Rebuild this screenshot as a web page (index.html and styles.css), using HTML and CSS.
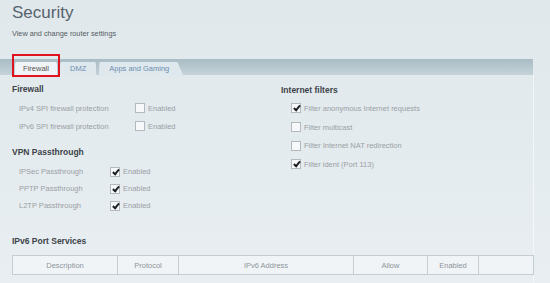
FILE: index.html
```html
<!DOCTYPE html>
<html lang="en">
<head>
    <meta charset="UTF-8">
    <title>Security</title>
    <link rel="stylesheet" href="styles.css">
</head>
<body>
<div class="page">
    <div class="header">
        <h1>Security</h1>
        <p class="subtitle">View and change router settings</p>
    </div>
    <div class="tabbar">
        <div class="tab active">Firewall</div>
        <div class="tab">DMZ</div>
        <div class="tab last">Apps and Gaming</div>
    </div>
    <div class="panel">
        <div class="columns">
            <div class="col left">
                <h2>Firewall</h2>
                <div class="rows fw">
                    <div class="row"><span class="label">IPv4 SPI firewall protection</span><span class="box"></span><span class="opt">Enabled</span></div>
                    <div class="row"><span class="label">IPv6 SPI firewall protection</span><span class="box"></span><span class="opt">Enabled</span></div>
                </div>
                <h2 class="vpn-title">VPN Passthrough</h2>
                <div class="rows vpn">
                    <div class="row"><span class="label">IPSec Passthrough</span><span class="box checked"></span><span class="opt">Enabled</span></div>
                    <div class="row"><span class="label">PPTP Passthrough</span><span class="box checked"></span><span class="opt">Enabled</span></div>
                    <div class="row"><span class="label">L2TP Passthrough</span><span class="box checked"></span><span class="opt">Enabled</span></div>
                </div>
            </div>
            <div class="col right">
                <h2>Internet filters</h2>
                <div class="rows filters">
                    <div class="row"><span class="box checked"></span><span class="opt">Filter anonymous Internet requests</span></div>
                    <div class="row"><span class="box"></span><span class="opt">Filter multicast</span></div>
                    <div class="row"><span class="box"></span><span class="opt">Filter Internet NAT redirection</span></div>
                    <div class="row"><span class="box checked"></span><span class="opt">Filter ident (Port 113)</span></div>
                </div>
            </div>
        </div>
        <h2 class="ports-title">IPv6 Port Services</h2>
        <table class="ports">
            <tr>
                <th class="c-desc">Description</th>
                <th class="c-proto">Protocol</th>
                <th class="c-addr">IPv6 Address</th>
                <th class="c-allow">Allow</th>
                <th class="c-en">Enabled</th>
                <th></th>
            </tr>
        </table>
    </div>
</div>
</body>
</html>
```

FILE: styles.css
```css
body {
    margin: 0;
    padding: 0;
    font-family: 'Liberation Sans', Arial, sans-serif;
    background: #e3eaee;
    color: #444;
    overflow: hidden;
}
.page {
    width: 550px;
    height: 283px;
    background: linear-gradient(#e0e8ec, #e8eef1);
}
.header {
    padding: 3px 0 0 12px;
    height: 57px;
    box-sizing: border-box;
}
h1 {
    margin: 0;
    font-size: 17px;
    font-weight: normal;
    color: #56636c;
    line-height: 20px;
}
.subtitle {
    margin: 6px 0 0;
    font-size: 7.3px;
    line-height: 9px;
    color: #555c62;
}
.tabbar {
    width: 533px;
    height: 16px;
    margin-top: 2px;
    background: linear-gradient(#a9bcc4, #c5d3d9);
    display: flex;
    align-items: flex-end;
    padding-left: 15px;
    box-sizing: border-box;
}
.tab {
    height: 13px;
    line-height: 13px;
    font-size: 7.5px;
    padding: 0 10px;
    margin-right: 3px;
    color: #6d8fb0;
    background: #dfe8ed;
    border-radius: 2px 2px 0 0;
}
.tab.active {
    width: 42px;
    box-sizing: border-box;
    text-align: center;
    padding: 0;
    color: #555;
    background: #f1f4f6;
    position: relative;
    z-index: 1;
}
/* highlight drawn over the selected tab */
.tab.active::after {
    content: "";
    position: absolute;
    left: -3px;
    right: -3px;
    top: -8px;
    bottom: -2px;
    border: 2px solid #e0141e;
}
.tab.last {
    padding-right: 14px;
    clip-path: polygon(0 0, calc(100% - 6px) 0, 100% 100%, 0 100%);
}
.panel {
    width: 534px;
    padding: 0 0 0 12px;
    box-sizing: border-box;
    border-right: 1px solid #f3f6f7;
    height: 208px;
}
.columns {
    display: flex;
}
.col.left {
    width: 269px;
}
h2 {
    margin: 0;
    font-size: 8.5px;
    font-weight: bold;
    color: #3d4349;
    line-height: 12px;
}
.col.left h2:first-child {
    padding-top: 8px;
}
.col.right h2 {
    padding-top: 9px;
}
.rows {
    padding: 4px 0 0 7px;
}
.row {
    display: flex;
    align-items: center;
    height: 18px;
    font-size: 7.5px;
    color: #9aa0a5;
}
.fw .label {
    width: 116px;
}
.vpn {
    padding-top: 5px;
}
.vpn .label {
    width: 91px;
}
.vpn .row {
    height: 17px;
}
.filters {
    padding-top: 3px;
    padding-left: 10px;
}
.filters .row {
    height: 18.7px;
}
.box {
    width: 8px;
    height: 8px;
    border: 1px solid #b4b9bd;
    background: #f7f8f9;
    margin-right: 3px;
    position: relative;
    flex: none;
}
.box.checked::after {
    content: "";
    position: absolute;
    left: 3px;
    top: 0;
    width: 2px;
    height: 5px;
    border: solid #1e2226;
    border-width: 0 2px 2px 0;
    transform: rotate(40deg);
}
.vpn-title {
    margin-top: 11px;
}
.ports-title {
    margin-top: 21px;
}
.ports {
    margin-top: 8px;
    width: 522px;
    table-layout: fixed;
    border-collapse: collapse;
    background: #f1f4f6;
}
.ports th {
    border: 1px solid #c5cdd2;
    height: 18px;
    padding: 0;
    font-size: 7.5px;
    font-weight: normal;
    color: #8d959b;
}
.c-desc { width: 104px; }
.c-proto { width: 60px; }
.c-addr { width: 174px; }
.c-allow { width: 73px; }
.c-en { width: 50px; }
```
